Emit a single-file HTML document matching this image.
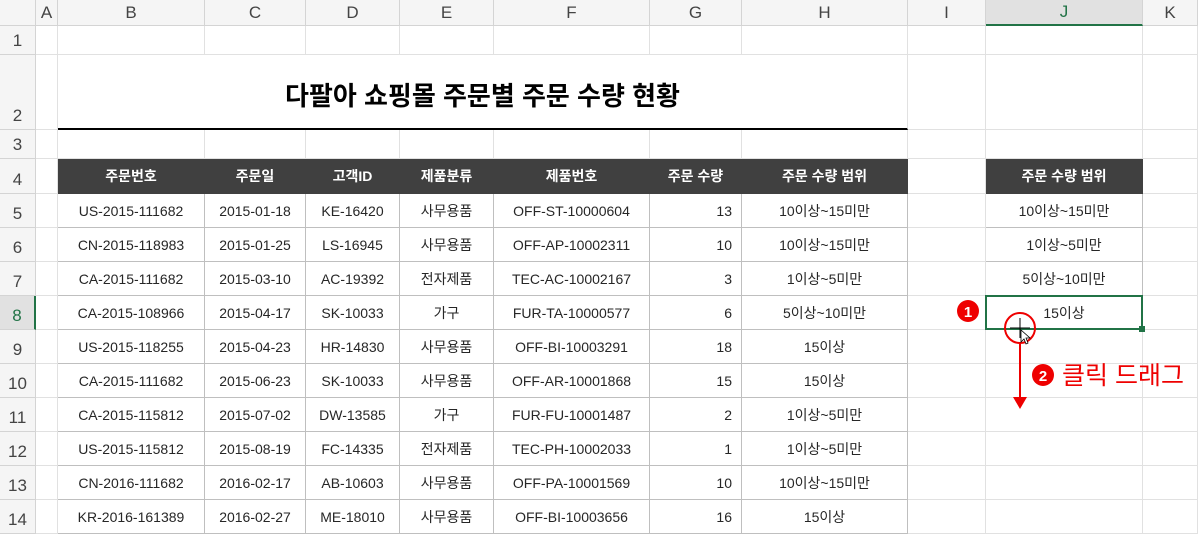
<!DOCTYPE html>
<html><head><meta charset="utf-8"><style>
*{margin:0;padding:0;box-sizing:border-box}
body{width:1198px;height:533px;overflow:hidden;background:#fff;font-family:"Liberation Sans","Noto Sans CJK KR",sans-serif;position:relative}
.g{display:grid;grid-template-columns:36px 22px 147px 101px 94px 94px 156px 92px 166px 78px 157px 55px;grid-template-rows:26px 29px 75px 29px 35px repeat(10,34px);position:absolute;left:0;top:0}
.g>div{border-right:1px solid #e1e1e1;border-bottom:1px solid #e1e1e1;display:flex;align-items:center;justify-content:center;font-size:14px;color:#262626;white-space:nowrap}
.ch{background:#f5f5f5;color:#444!important;font-size:17px!important;border-color:#d4d4d4!important}
.rh{background:#f5f5f5;color:#444!important;font-size:17px!important;border-color:#d4d4d4!important;align-items:flex-end!important;padding-bottom:3px}
.sel{background:#e1e1e1!important;color:#217346!important}
.th{background:#404040;color:#fff!important;font-weight:bold;border-color:#404040!important}
.t{border-color:#bfbfbf!important}
.r{justify-content:flex-end!important;padding-right:9px}
</style></head><body>
<div class="g">
<div class="ch" style="background:#f5f5f5"></div><div class="ch">A</div><div class="ch">B</div><div class="ch">C</div><div class="ch">D</div><div class="ch">E</div><div class="ch">F</div><div class="ch">G</div><div class="ch">H</div><div class="ch">I</div><div class="ch sel" style="border-bottom:2px solid #217346!important">J</div><div class="ch">K</div>
<div class="rh">1</div><div></div><div></div><div></div><div></div><div></div><div></div><div></div><div></div><div></div><div></div><div></div>
<div class="rh">2</div><div></div><div style="grid-column:span 7;border-bottom:2px solid #000;font-size:26px;font-weight:bold;color:#000;padding-top:5px">다팔아 쇼핑몰 주문별 주문 수량 현황</div><div></div><div></div><div></div>
<div class="rh">3</div><div></div><div></div><div></div><div></div><div></div><div></div><div></div><div></div><div></div><div></div><div></div>
<div class="rh">4</div><div></div><div class="th">주문번호</div><div class="th">주문일</div><div class="th">고객ID</div><div class="th">제품분류</div><div class="th">제품번호</div><div class="th">주문 수량</div><div class="th">주문 수량 범위</div><div></div><div class="th">주문 수량 범위</div><div></div>
<div class="rh">5</div><div></div><div class="t">US-2015-111682</div><div class="t">2015-01-18</div><div class="t">KE-16420</div><div class="t">사무용품</div><div class="t">OFF-ST-10000604</div><div class="t r">13</div><div class="t">10이상~15미만</div><div></div><div class="t">10이상~15미만</div><div></div>
<div class="rh">6</div><div></div><div class="t">CN-2015-118983</div><div class="t">2015-01-25</div><div class="t">LS-16945</div><div class="t">사무용품</div><div class="t">OFF-AP-10002311</div><div class="t r">10</div><div class="t">10이상~15미만</div><div></div><div class="t">1이상~5미만</div><div></div>
<div class="rh">7</div><div></div><div class="t">CA-2015-111682</div><div class="t">2015-03-10</div><div class="t">AC-19392</div><div class="t">전자제품</div><div class="t">TEC-AC-10002167</div><div class="t r">3</div><div class="t">1이상~5미만</div><div></div><div class="t">5이상~10미만</div><div></div>
<div class="rh sel" style="border-right:2px solid #217346!important">8</div><div></div><div class="t">CA-2015-108966</div><div class="t">2015-04-17</div><div class="t">SK-10033</div><div class="t">가구</div><div class="t">FUR-TA-10000577</div><div class="t r">6</div><div class="t">5이상~10미만</div><div></div><div style="border:2px solid #217346;margin:-1px 0 0 -1px;position:relative">15이상<span style="position:absolute;right:-4px;bottom:-4px;width:6px;height:6px;background:#217346"></span></div><div></div>
<div class="rh">9</div><div></div><div class="t">US-2015-118255</div><div class="t">2015-04-23</div><div class="t">HR-14830</div><div class="t">사무용품</div><div class="t">OFF-BI-10003291</div><div class="t r">18</div><div class="t">15이상</div><div></div><div></div><div></div>
<div class="rh">10</div><div></div><div class="t">CA-2015-111682</div><div class="t">2015-06-23</div><div class="t">SK-10033</div><div class="t">사무용품</div><div class="t">OFF-AR-10001868</div><div class="t r">15</div><div class="t">15이상</div><div></div><div></div><div></div>
<div class="rh">11</div><div></div><div class="t">CA-2015-115812</div><div class="t">2015-07-02</div><div class="t">DW-13585</div><div class="t">가구</div><div class="t">FUR-FU-10001487</div><div class="t r">2</div><div class="t">1이상~5미만</div><div></div><div></div><div></div>
<div class="rh">12</div><div></div><div class="t">US-2015-115812</div><div class="t">2015-08-19</div><div class="t">FC-14335</div><div class="t">전자제품</div><div class="t">TEC-PH-10002033</div><div class="t r">1</div><div class="t">1이상~5미만</div><div></div><div></div><div></div>
<div class="rh">13</div><div></div><div class="t">CN-2016-111682</div><div class="t">2016-02-17</div><div class="t">AB-10603</div><div class="t">사무용품</div><div class="t">OFF-PA-10001569</div><div class="t r">10</div><div class="t">10이상~15미만</div><div></div><div></div><div></div>
<div class="rh">14</div><div></div><div class="t">KR-2016-161389</div><div class="t">2016-02-27</div><div class="t">ME-18010</div><div class="t">사무용품</div><div class="t">OFF-BI-10003656</div><div class="t r">16</div><div class="t">15이상</div><div></div><div></div><div></div>
</div>
<svg width="1198" height="533" style="position:absolute;left:0;top:0">
<circle cx="968" cy="311" r="11" fill="#e00"/>
<text x="968" y="317" fill="#fff" font-size="15" font-weight="bold" text-anchor="middle" font-family="Liberation Sans">1</text>
<circle cx="1020" cy="328" r="15" fill="none" stroke="#e00" stroke-width="2"/>
<path d="M1020 318v20M1010 328h20" stroke="#000" stroke-width="1"/>
<path d="M1021 330l0 12 3-3 2 5 2-1-2-5 4 0z" fill="#fff" stroke="#000" stroke-width="0.8"/>
<line x1="1020" y1="343" x2="1020" y2="399" stroke="#e00" stroke-width="2"/>
<path d="M1013 397h14l-7 12z" fill="#e00"/>
<circle cx="1043" cy="375" r="11" fill="#e00"/>
<text x="1043" y="381" fill="#fff" font-size="15" font-weight="bold" text-anchor="middle" font-family="Liberation Sans">2</text>
<text x="1062" y="384" fill="#e00" font-size="25" font-family="Liberation Sans,Noto Sans CJK KR,sans-serif">클릭 드래그</text>
</svg>
</body></html>
